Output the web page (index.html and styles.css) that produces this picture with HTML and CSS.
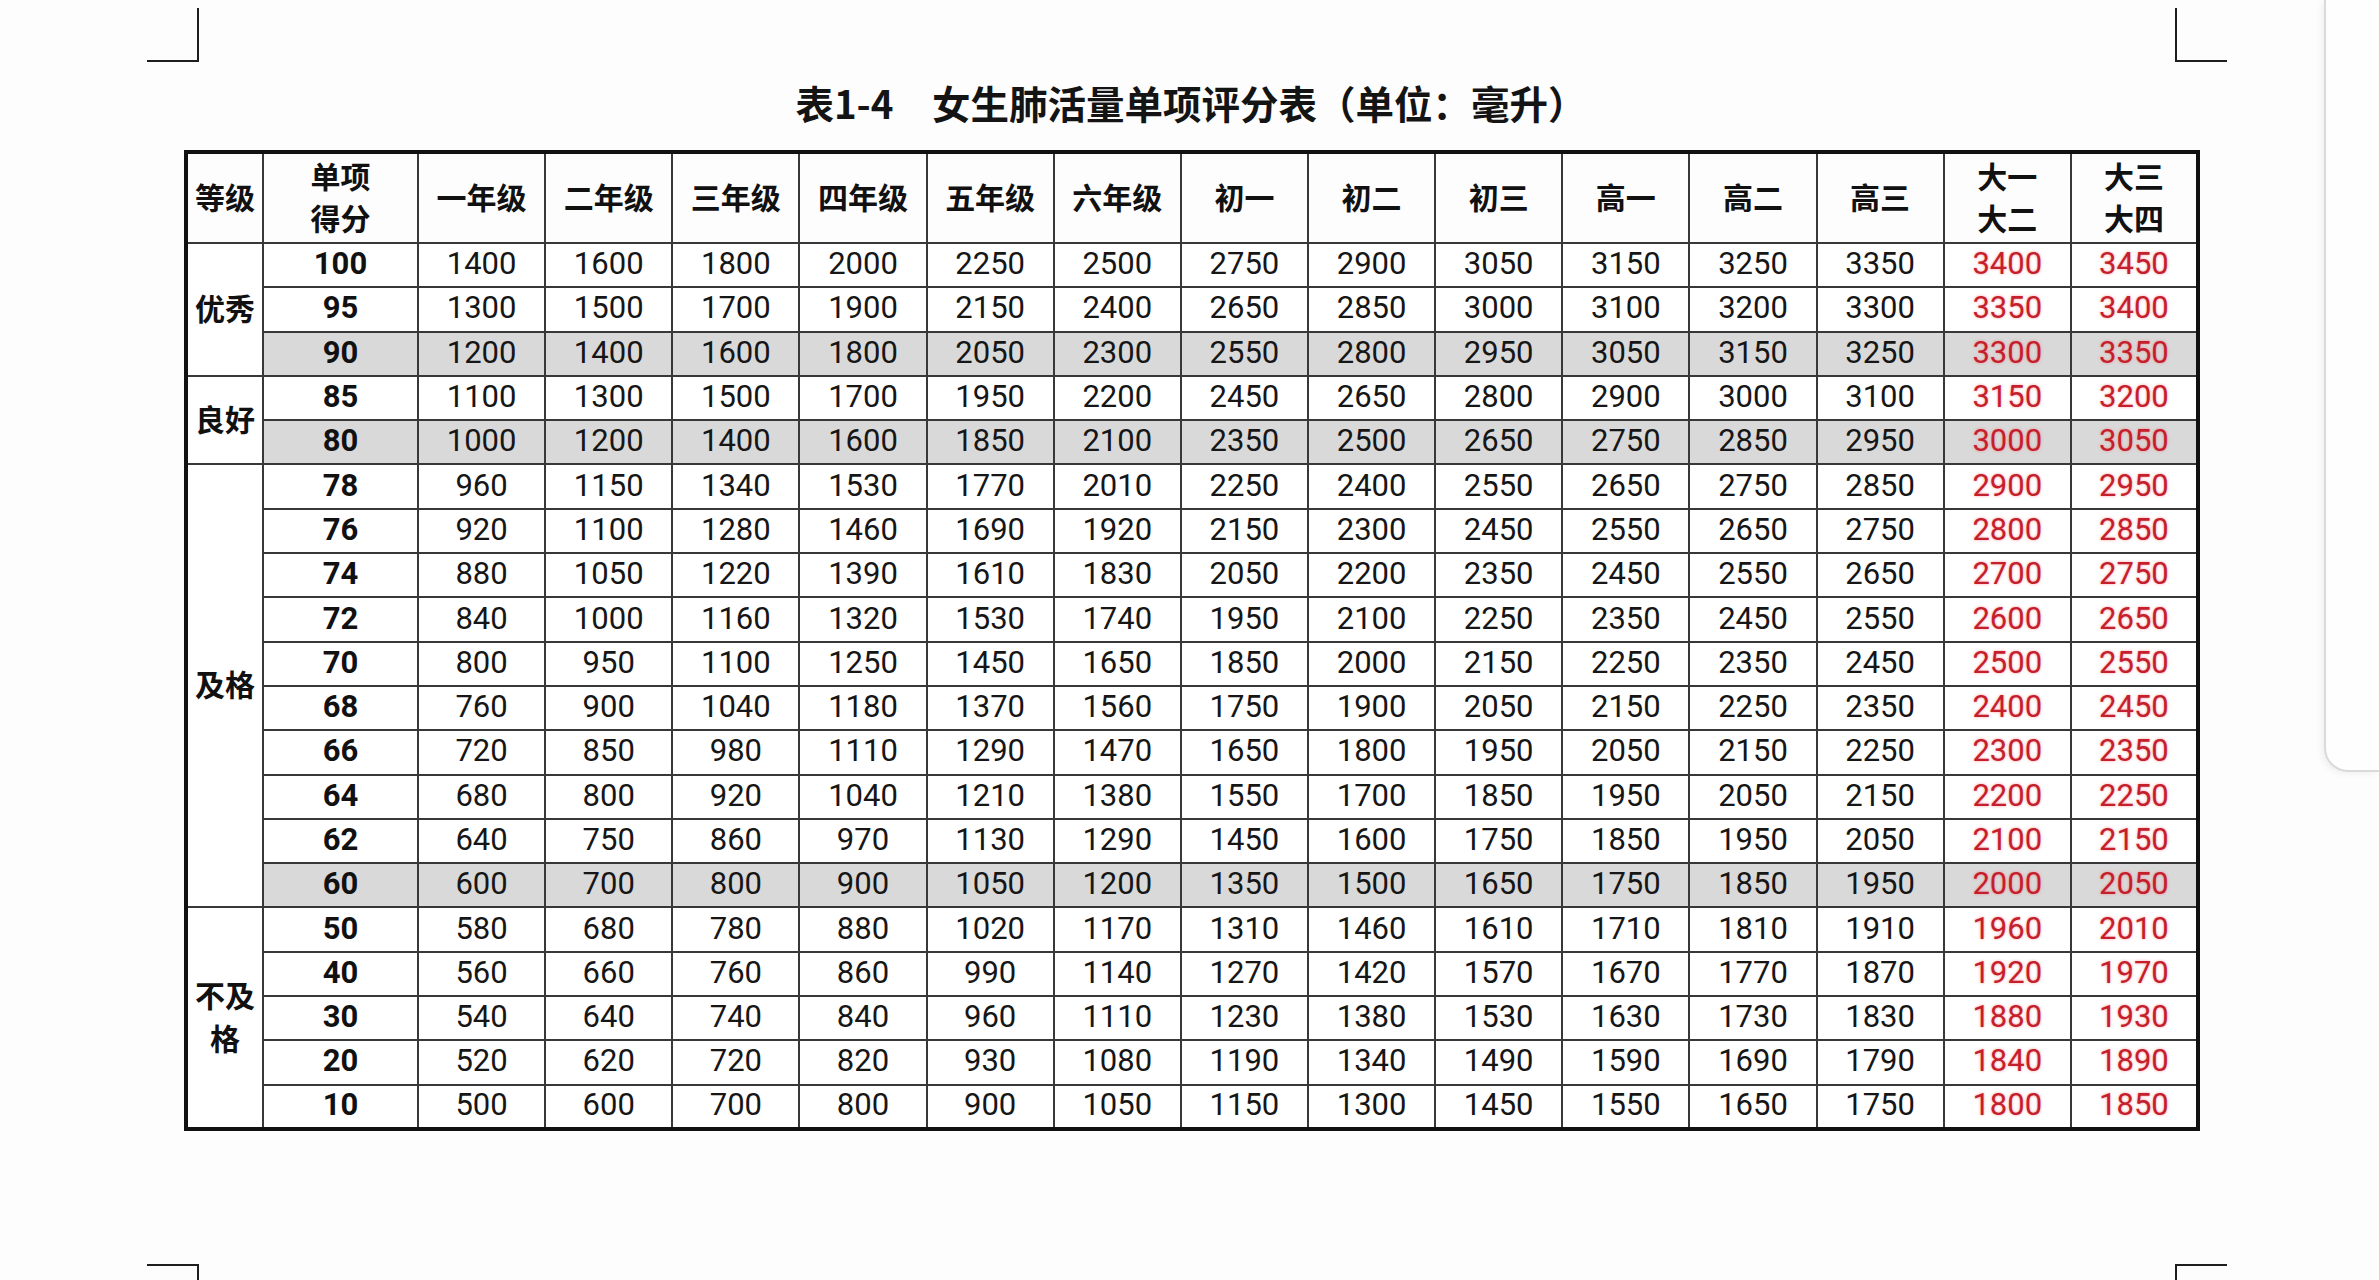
FILE: index.html
```html
<!DOCTYPE html>
<html lang="zh-CN">
<head>
<meta charset="utf-8">
<title>表1-4 女生肺活量单项评分表</title>
<link rel="stylesheet" href="styles.css">
</head>
<body>
<div class="screen">
  <main class="page">
    <div class="marks marks-top"><span class="mark tl"></span><span class="mark tr"></span></div>
    <section class="sheet">
      <h1 class="title">表1-4　女生肺活量单项评分表（单位：毫升）</h1>
      <table class="grid">
        <colgroup><col class="c-grade"><col class="c-score"><col span="14"></colgroup>
        <thead>
          <tr>
            <th>等级</th><th>单项<br>得分</th><th>一年级</th><th>二年级</th><th>三年级</th><th>四年级</th><th>五年级</th><th>六年级</th><th>初一</th><th>初二</th><th>初三</th><th>高一</th><th>高二</th><th>高三</th><th>大一<br>大二</th><th>大三<br>大四</th>
          </tr>
        </thead>
        <tbody>
          <tr><td class="grp" rowspan="3">优秀</td><td class="sc">100</td><td>1400</td><td>1600</td><td>1800</td><td>2000</td><td>2250</td><td>2500</td><td>2750</td><td>2900</td><td>3050</td><td>3150</td><td>3250</td><td>3350</td><td class="red">3400</td><td class="red">3450</td></tr>
          <tr><td class="sc">95</td><td>1300</td><td>1500</td><td>1700</td><td>1900</td><td>2150</td><td>2400</td><td>2650</td><td>2850</td><td>3000</td><td>3100</td><td>3200</td><td>3300</td><td class="red">3350</td><td class="red">3400</td></tr>
          <tr class="shade"><td class="sc">90</td><td>1200</td><td>1400</td><td>1600</td><td>1800</td><td>2050</td><td>2300</td><td>2550</td><td>2800</td><td>2950</td><td>3050</td><td>3150</td><td>3250</td><td class="red">3300</td><td class="red">3350</td></tr>
          <tr><td class="grp" rowspan="2">良好</td><td class="sc">85</td><td>1100</td><td>1300</td><td>1500</td><td>1700</td><td>1950</td><td>2200</td><td>2450</td><td>2650</td><td>2800</td><td>2900</td><td>3000</td><td>3100</td><td class="red">3150</td><td class="red">3200</td></tr>
          <tr class="shade"><td class="sc">80</td><td>1000</td><td>1200</td><td>1400</td><td>1600</td><td>1850</td><td>2100</td><td>2350</td><td>2500</td><td>2650</td><td>2750</td><td>2850</td><td>2950</td><td class="red">3000</td><td class="red">3050</td></tr>
          <tr><td class="grp" rowspan="10">及格</td><td class="sc">78</td><td>960</td><td>1150</td><td>1340</td><td>1530</td><td>1770</td><td>2010</td><td>2250</td><td>2400</td><td>2550</td><td>2650</td><td>2750</td><td>2850</td><td class="red">2900</td><td class="red">2950</td></tr>
          <tr><td class="sc">76</td><td>920</td><td>1100</td><td>1280</td><td>1460</td><td>1690</td><td>1920</td><td>2150</td><td>2300</td><td>2450</td><td>2550</td><td>2650</td><td>2750</td><td class="red">2800</td><td class="red">2850</td></tr>
          <tr><td class="sc">74</td><td>880</td><td>1050</td><td>1220</td><td>1390</td><td>1610</td><td>1830</td><td>2050</td><td>2200</td><td>2350</td><td>2450</td><td>2550</td><td>2650</td><td class="red">2700</td><td class="red">2750</td></tr>
          <tr><td class="sc">72</td><td>840</td><td>1000</td><td>1160</td><td>1320</td><td>1530</td><td>1740</td><td>1950</td><td>2100</td><td>2250</td><td>2350</td><td>2450</td><td>2550</td><td class="red">2600</td><td class="red">2650</td></tr>
          <tr><td class="sc">70</td><td>800</td><td>950</td><td>1100</td><td>1250</td><td>1450</td><td>1650</td><td>1850</td><td>2000</td><td>2150</td><td>2250</td><td>2350</td><td>2450</td><td class="red">2500</td><td class="red">2550</td></tr>
          <tr><td class="sc">68</td><td>760</td><td>900</td><td>1040</td><td>1180</td><td>1370</td><td>1560</td><td>1750</td><td>1900</td><td>2050</td><td>2150</td><td>2250</td><td>2350</td><td class="red">2400</td><td class="red">2450</td></tr>
          <tr><td class="sc">66</td><td>720</td><td>850</td><td>980</td><td>1110</td><td>1290</td><td>1470</td><td>1650</td><td>1800</td><td>1950</td><td>2050</td><td>2150</td><td>2250</td><td class="red">2300</td><td class="red">2350</td></tr>
          <tr><td class="sc">64</td><td>680</td><td>800</td><td>920</td><td>1040</td><td>1210</td><td>1380</td><td>1550</td><td>1700</td><td>1850</td><td>1950</td><td>2050</td><td>2150</td><td class="red">2200</td><td class="red">2250</td></tr>
          <tr><td class="sc">62</td><td>640</td><td>750</td><td>860</td><td>970</td><td>1130</td><td>1290</td><td>1450</td><td>1600</td><td>1750</td><td>1850</td><td>1950</td><td>2050</td><td class="red">2100</td><td class="red">2150</td></tr>
          <tr class="shade"><td class="sc">60</td><td>600</td><td>700</td><td>800</td><td>900</td><td>1050</td><td>1200</td><td>1350</td><td>1500</td><td>1650</td><td>1750</td><td>1850</td><td>1950</td><td class="red">2000</td><td class="red">2050</td></tr>
          <tr><td class="grp" rowspan="5">不及格</td><td class="sc">50</td><td>580</td><td>680</td><td>780</td><td>880</td><td>1020</td><td>1170</td><td>1310</td><td>1460</td><td>1610</td><td>1710</td><td>1810</td><td>1910</td><td class="red">1960</td><td class="red">2010</td></tr>
          <tr><td class="sc">40</td><td>560</td><td>660</td><td>760</td><td>860</td><td>990</td><td>1140</td><td>1270</td><td>1420</td><td>1570</td><td>1670</td><td>1770</td><td>1870</td><td class="red">1920</td><td class="red">1970</td></tr>
          <tr><td class="sc">30</td><td>540</td><td>640</td><td>740</td><td>840</td><td>960</td><td>1110</td><td>1230</td><td>1380</td><td>1530</td><td>1630</td><td>1730</td><td>1830</td><td class="red">1880</td><td class="red">1930</td></tr>
          <tr><td class="sc">20</td><td>520</td><td>620</td><td>720</td><td>820</td><td>930</td><td>1080</td><td>1190</td><td>1340</td><td>1490</td><td>1590</td><td>1690</td><td>1790</td><td class="red">1840</td><td class="red">1890</td></tr>
          <tr><td class="sc">10</td><td>500</td><td>600</td><td>700</td><td>800</td><td>900</td><td>1050</td><td>1150</td><td>1300</td><td>1450</td><td>1550</td><td>1650</td><td>1750</td><td class="red">1800</td><td class="red">1850</td></tr>
        </tbody>
      </table>
    </section>
    <div class="marks marks-bottom"><span class="mark bl"></span><span class="mark br"></span></div>
  </main>
  <aside class="side"></aside>
</div>
</body>
</html>
```

FILE: styles.css
```css
html, body {
  margin: 0;
  padding: 0;
  background: #fdfdfd;
}

.screen {
  display: flex;
  align-items: flex-start;
  width: 2379px;
  height: 1280px;
  overflow: hidden;
}

.page {
  flex: none;
  width: 2324px;
  height: 1280px;
  box-sizing: border-box;
  padding-left: 147px;
  display: flex;
  flex-direction: column;
}

.marks {
  display: flex;
  justify-content: space-between;
  width: 2080px;
  flex: none;
}

.marks-top {
  margin-top: 8px;
  height: 54px;
}

.marks-bottom {
  margin-top: 133px;
  height: 20px;
}

.mark {
  display: block;
  width: 52px;
  height: 100%;
  box-sizing: border-box;
}

.mark.tl { border-right: 2px solid #1e1e1e; border-bottom: 2px solid #1e1e1e; }
.mark.tr { border-left: 2px solid #1e1e1e; border-bottom: 2px solid #1e1e1e; }
.mark.bl { border-right: 2px solid #1e1e1e; border-top: 2px solid #1e1e1e; }
.mark.br { border-left: 2px solid #1e1e1e; border-top: 2px solid #1e1e1e; }

.sheet {
  margin-left: 37px;
  width: 2016px;
  flex: none;
}

.title {
  margin: 15px 0 23px;
  height: 50px;
  line-height: 50px;
  text-align: center;
  font-family: "Noto Sans CJK SC", "Noto Sans", sans-serif;
  font-weight: 700;
  font-size: 38.5px;
  color: #141414;
  padding-right: 2px;
}

.grid {
  table-layout: fixed;
  width: 2016px;
  border-collapse: collapse;
  border: 4px solid #111;
  font-family: Roboto, "Noto Sans", sans-serif;
  font-size: 31px;
  color: #161616;
}

.c-grade { width: 77px; }
.c-score { width: 155px; }

.grid th,
.grid td {
  border: 2px solid #383838;
  padding: 0;
  text-align: center;
  vertical-align: middle;
}

.grid thead tr { height: 91px; }
.grid tbody tr { height: 44.3px; }

.grid th {
  font-family: "Noto Sans CJK SC", sans-serif;
  font-weight: 700;
  font-size: 30px;
  line-height: 42px;
  color: #111;
  padding-bottom: 4px;
}

.grid td {
  line-height: 35px;
  padding-bottom: 3px;
}

.grid td.grp {
  font-family: "Noto Sans CJK SC", sans-serif;
  font-weight: 700;
  font-size: 30px;
  line-height: 43px;
  color: #111;
  background: #fff;
  padding-bottom: 4px;
}

.grid td.sc {
  font-weight: 700;
  color: #111;
}

.grid td.red {
  color: #c41f2d;
  text-shadow: 0 0 3px rgba(255, 90, 100, 0.6);
}

.grid tbody td { background: #fff; }
.grid tr.shade td { background: #d9d9d9; }

.side {
  flex: none;
  width: 55px;
  height: 772px;
  box-sizing: border-box;
  border-left: 2px solid #dadada;
  border-bottom: 2px solid #dadada;
  border-bottom-left-radius: 24px;
  background: #fefefe;
  box-shadow: -3px 2px 6px rgba(0, 0, 0, 0.05);
}
```
